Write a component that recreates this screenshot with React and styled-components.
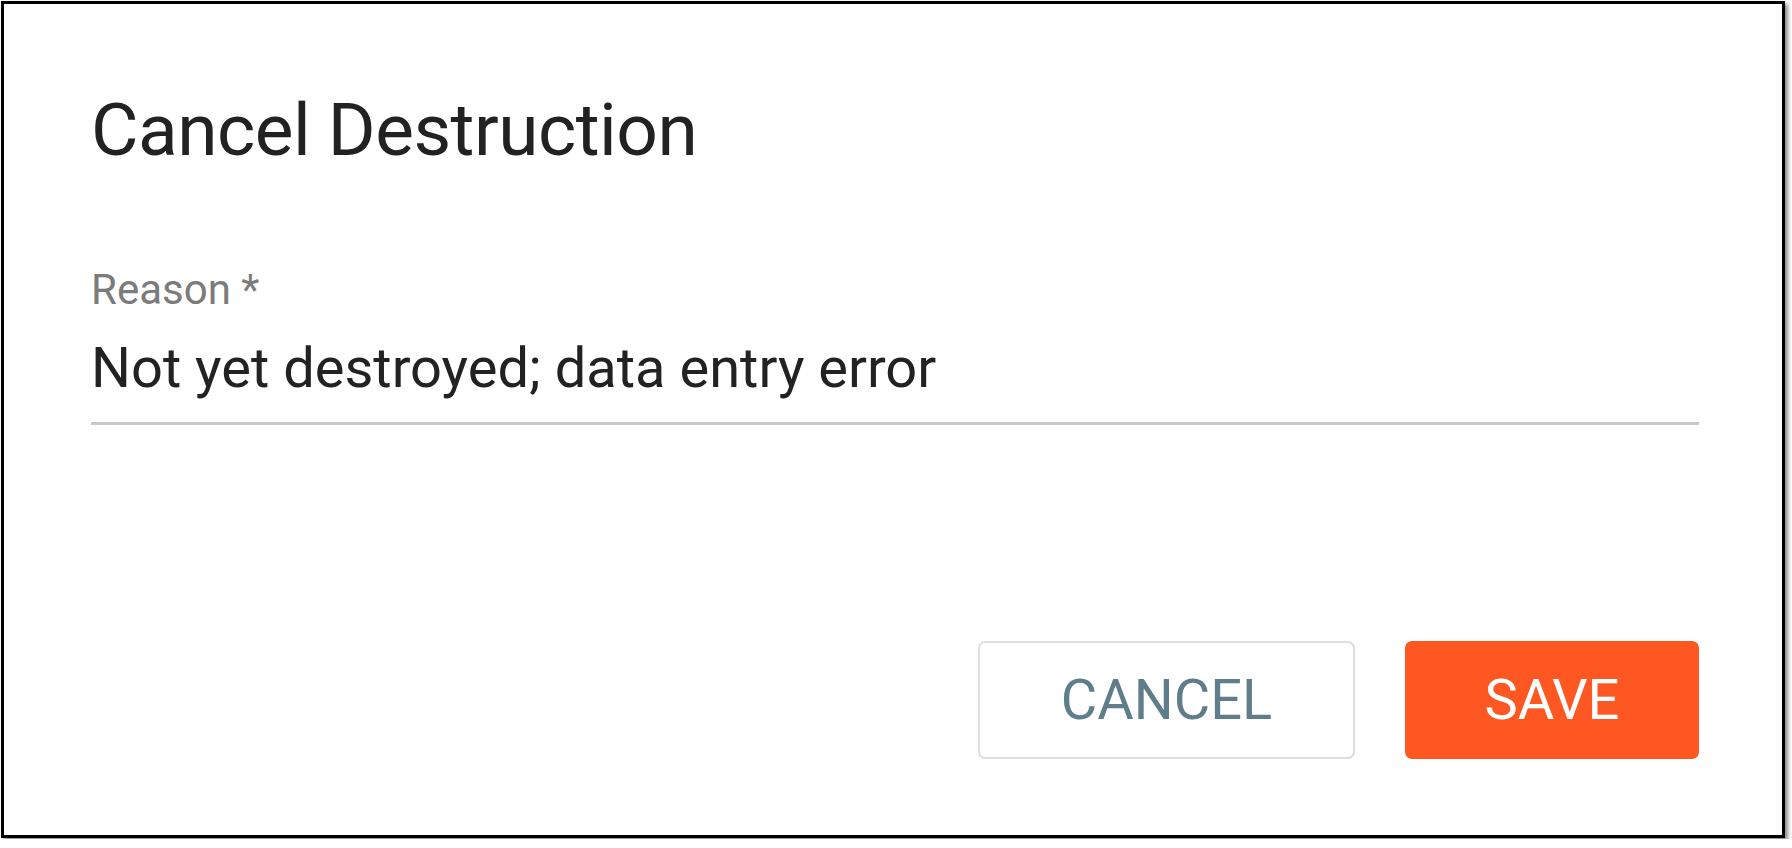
import styled, { createGlobalStyle } from 'styled-components'

const GlobalStyle = createGlobalStyle`
  body {
    margin: 0;
    background: #ffffff;
    font-family: Roboto, 'Liberation Sans', sans-serif;
  }
`

function App() {
  return (
    <>
      <GlobalStyle />
      <Frame>
        <Title>Cancel Destruction</Title>
        <Field>
          <Label>Reason *</Label>
          <Value>Not yet destroyed; data entry error</Value>
        </Field>
        <Actions>
          <Button>CANCEL</Button>
          <Button primary>SAVE</Button>
        </Actions>
      </Frame>
    </>
  )
}

const Frame = styled.div`
  box-sizing: border-box;
  margin: 1px;
  width: 1784px;
  height: 837px;
  border: 3px solid #000;
  box-shadow: 3px 3px 4px rgba(0, 0, 0, 0.45);
  background: #fff;
  padding: 82px 83px 0 87px;
  display: flex;
  flex-direction: column;
`

const Title = styled.h1`
  margin: 0;
  font-size: 73px;
  line-height: 88px;
  font-weight: 400;
  letter-spacing: -0.5px;
  color: #222;
`

const Field = styled.div`
  margin-top: 91px;
  display: flex;
  flex-direction: column;
  gap: 20px;
  padding-bottom: 21px;
  border-bottom: 3px solid #c9c9c9;
`

const Label = styled.div`
  font-size: 42px;
  line-height: 50px;
  color: #7b7b7b;
`

const Value = styled.div`
  font-size: 56px;
  line-height: 66px;
  color: #222;
`

const Actions = styled.div`
  margin-top: 216px;
  display: flex;
  justify-content: flex-end;
  gap: 50px;
`

const Button = styled.button`
  box-sizing: border-box;
  height: 118px;
  width: ${p => (p.primary ? '294px' : '377px')};
  border-radius: 7px;
  border: ${p => (p.primary ? 'none' : '2px solid #dedede')};
  background: ${p => (p.primary ? '#ff5722' : '#fff')};
  color: ${p => (p.primary ? '#fff' : '#607d8b')};
  font-family: Roboto, 'Liberation Sans', sans-serif;
  font-size: 56px;
  font-weight: 400;
  padding: 0;
  cursor: pointer;
`

export default App
